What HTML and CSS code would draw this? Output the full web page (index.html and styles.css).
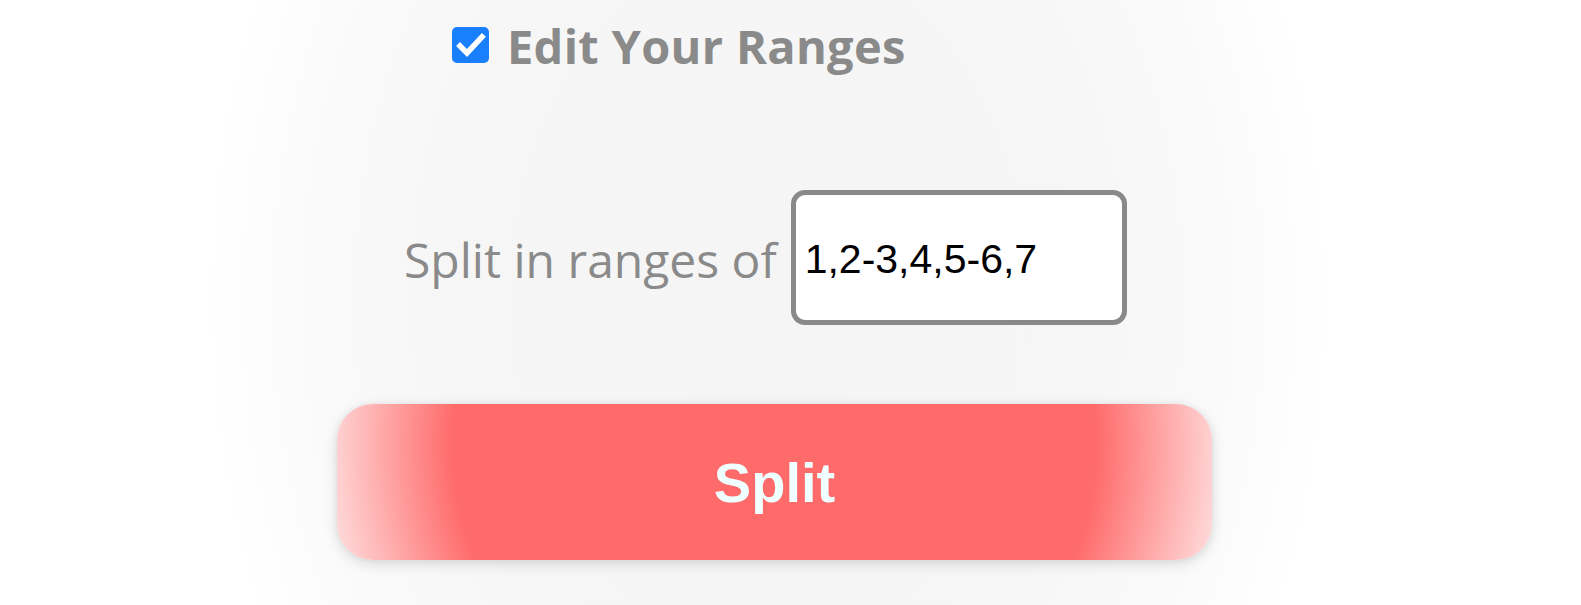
FILE: index.html
```html
<!DOCTYPE html>
<html lang="en">
<head>
<meta charset="utf-8">
<title>Split PDF</title>
<link rel="stylesheet" href="styles.css">
</head>
<body>
<main class="page">
  <label class="check-row">
    <span class="check-box" role="checkbox" aria-checked="true">
      <svg viewBox="0 0 37 36" width="37" height="36" aria-hidden="true">
        <rect x="0" y="0" width="37" height="36" rx="5" fill="#1a7ffb"/>
        <path d="M8 19 L15 26 L30 10" fill="none" stroke="#fff" stroke-width="5.5" stroke-linecap="square" stroke-linejoin="miter"/>
      </svg>
    </span>
    <span class="check-text">Edit Your Ranges</span>
  </label>

  <div class="range-row">
    <label class="range-label" for="ranges">Split in ranges of</label>
    <input class="range-input" id="ranges" type="text" value="1,2-3,4,5-6,7">
  </div>

  <button class="split-btn" type="button">Split</button>
</main>
</body>
</html>
```

FILE: styles.css
```css
html, body {
  margin: 0;
  padding: 0;
  height: 100%;
}

body {
  background: radial-gradient(ellipse 560px 760px at 768px 300px, #f5f5f5 0%, #f6f6f6 55%, #fafafa 82%, #ffffff 100%);
  font-family: "Open Sans", "Noto Sans", sans-serif;
  overflow: hidden;
}

.page {
  display: flex;
  flex-direction: column;
  align-items: flex-start;
  padding-top: 15px;
}

.check-row {
  display: flex;
  align-items: center;
  gap: 18px;
  height: 60px;
  margin-left: 452px;
  cursor: pointer;
}

.check-box {
  display: block;
  width: 37px;
  height: 36px;
}

.check-box svg {
  display: block;
}

.check-text {
  font-weight: 700;
  font-size: 47px;
  letter-spacing: 0.3px;
  line-height: 60px;
  color: #8a8a8a;
  white-space: nowrap;
  margin-top: 2px;
}

.range-row {
  display: flex;
  align-items: center;
  gap: 14px;
  margin-top: 115px;
  margin-left: 404px;
}

.range-label {
  font-size: 48px;
  color: #8a8a8a;
  white-space: nowrap;
  margin-top: 4px;
}

.range-input {
  box-sizing: border-box;
  width: 336px;
  height: 135px;
  border: 5px solid #898989;
  border-radius: 14px;
  background: #ffffff;
  padding: 0 9px;
  padding-top: 3px;
  font-family: "Liberation Sans", Arial, sans-serif;
  font-size: 41px;
  color: #000;
  outline: none;
}

.split-btn {
  box-sizing: border-box;
  width: 875px;
  height: 156px;
  margin-top: 79px;
  margin-left: 337px;
  border: none;
  border-radius: 36px;
  background: radial-gradient(circle farthest-corner at 50% 25%, #ff6b6b 0%, #ff6b6b 71%, #ffdede 100%);
  box-shadow: 0 4px 14px rgba(0, 0, 0, 0.13), 0 0 6px rgba(0, 0, 0, 0.05);
  color: #f0ffff;
  font-family: "Liberation Sans", Arial, sans-serif;
  font-weight: 700;
  font-size: 56px;
  cursor: pointer;
}
```
